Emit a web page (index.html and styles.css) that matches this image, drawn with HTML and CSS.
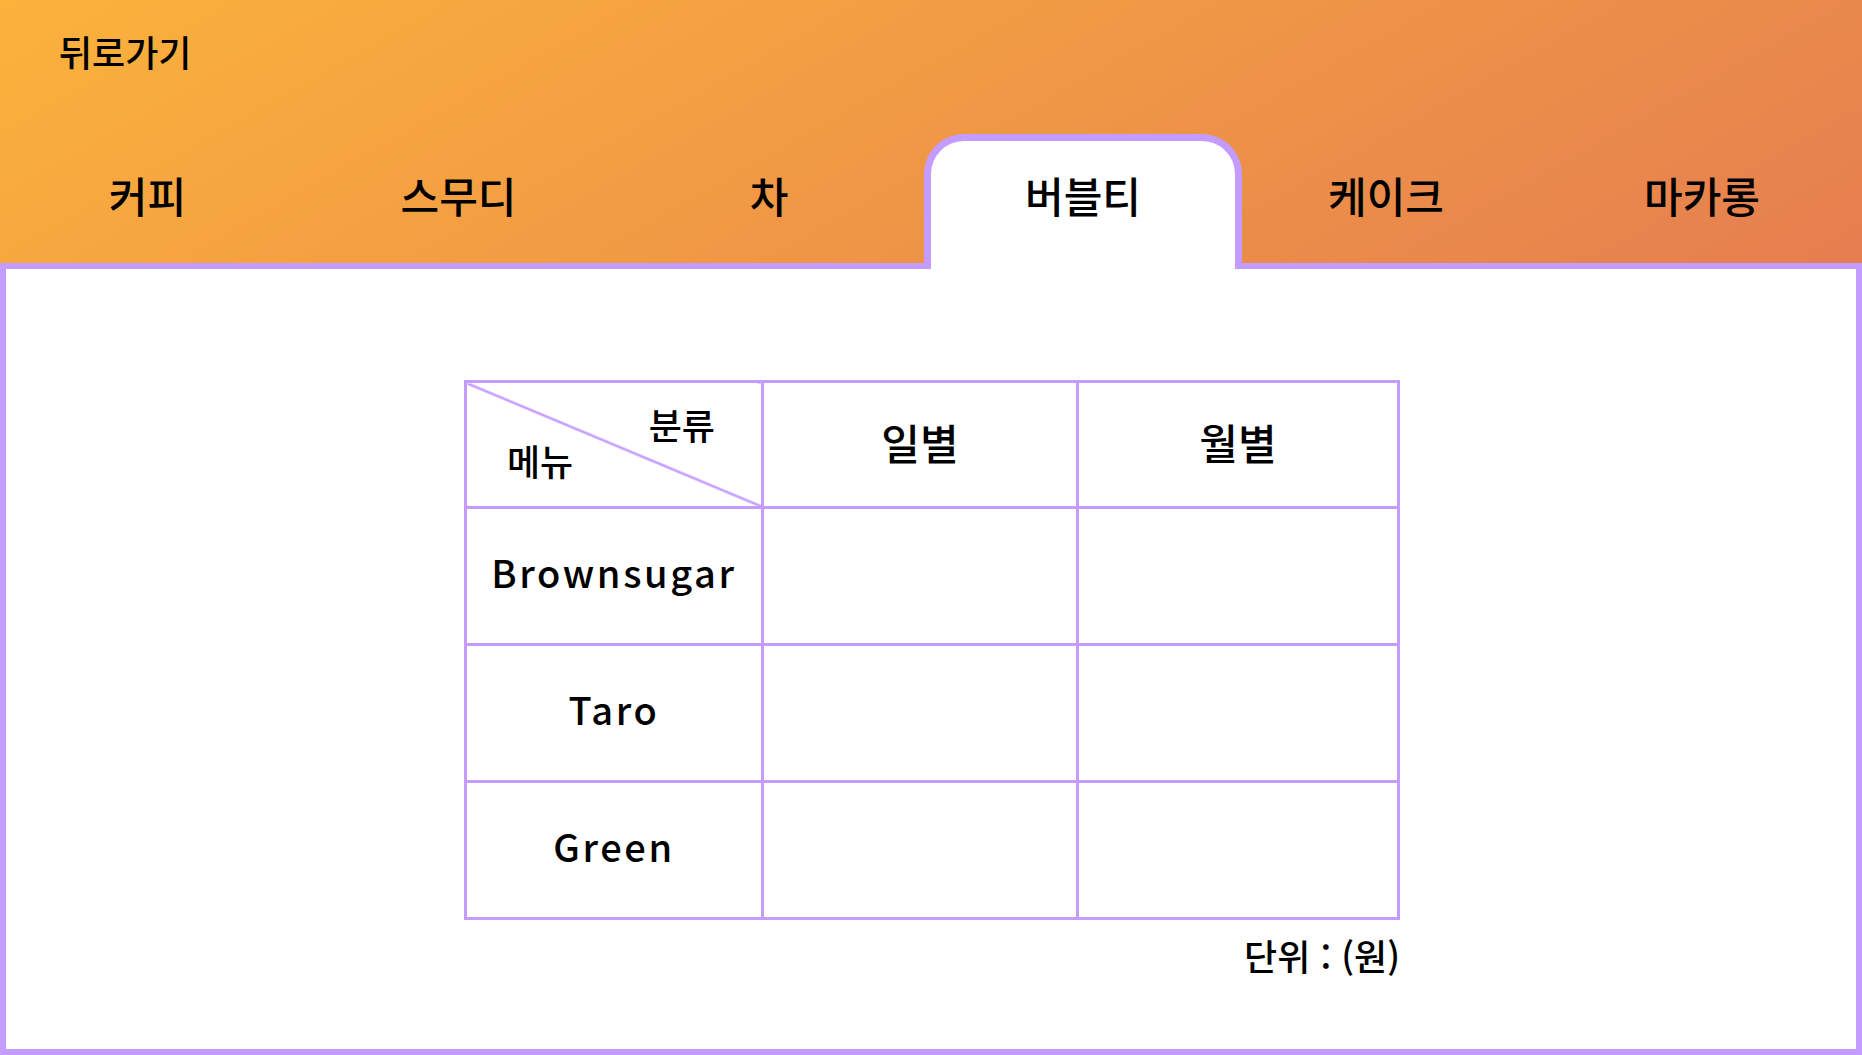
FILE: index.html
```html
<!DOCTYPE html>
<html lang="ko">
<head>
  <meta charset="UTF-8" />
  <meta name="viewport" content="width=device-width, initial-scale=1" />
  <title>매출 - 버블티</title>
  <link rel="stylesheet" href="styles.css">
</head>
<body>

  <header class="top">
    <a class="back" href="#">뒤로가기</a>
    <nav class="tabs">
      <a class="tab" href="#">커피</a>
      <a class="tab" href="#">스무디</a>
      <a class="tab" href="#">차</a>
      <a class="tab active" href="#">버블티</a>
      <a class="tab" href="#">케이크</a>
      <a class="tab" href="#">마카롱</a>
    </nav>
  </header>

  <main class="panel">
    <div class="sales">
      <table class="sales-table">
        <tr class="head-row">
          <th class="corner">
            <div class="corner-box">
              <span class="corner-top">분류</span>
              <span class="corner-bottom">메뉴</span>
            </div>
          </th>
          <th>일별</th>
          <th>월별</th>
        </tr>
        <tr>
          <td class="menu">Brownsugar</td>
          <td></td>
          <td></td>
        </tr>
        <tr>
          <td class="menu">Taro</td>
          <td></td>
          <td></td>
        </tr>
        <tr>
          <td class="menu">Green</td>
          <td></td>
          <td></td>
        </tr>
      </table>
      <p class="unit">단위 : (원)</p>
    </div>
  </main>

</body>
</html>
```

FILE: styles.css
```css
html, body {
  margin: 0;
  height: 100%;
}
body {
  font-family: "Noto Sans CJK KR", "Noto Sans", sans-serif;
  font-weight: 500;
  background: linear-gradient(to bottom right, #fbb23b, #d85f5c);
  color: #000;
  overflow: hidden;
}
a {
  color: inherit;
  text-decoration: none;
}

.top {
  height: 263px;
  display: flex;
  flex-direction: column;
}
.back {
  align-self: flex-start;
  margin: 30px 0 0 59px;
  font-size: 36px;
  line-height: 42px;
}
.tabs {
  margin: auto -12px -6px -8px;
  display: grid;
  grid-template-columns: 311px 311px 310px 318px 288px 344px;
  height: 135px;
  position: relative;
  z-index: 1;
}
.tab {
  display: flex;
  align-items: center;
  justify-content: center;
  border: 7px solid transparent;
  border-bottom: 0;
  padding-bottom: 22px;
  font-size: 42px;
}
.tab.active {
  background: #fff;
  border-color: #c49cff;
  border-radius: 40px 40px 0 0;
}

.panel {
  height: 792px;
  box-sizing: border-box;
  background: #fff;
  border: 6px solid #c49cff;
}
.sales {
  width: 936px;
  margin: 111px auto 0;
  padding-left: 2px;
}
.sales-table {
  width: 936px;
  border-collapse: collapse;
  table-layout: fixed;
}
.sales-table th,
.sales-table td {
  border: 3px solid #c49cff;
  text-align: center;
  font-weight: 500;
  padding: 0;
}
.sales-table th {
  font-size: 42px;
  padding-bottom: 6px;
}
.sales-table th:nth-child(1) { width: 294px; }
.sales-table th:nth-child(2) { width: 312px; }
.sales-table tr {
  height: 137px;
}
.sales-table .head-row {
  height: 126px;
}
.sales-table th.corner {
  padding: 0;
  background: linear-gradient(to top right, transparent calc(50% - 1.5px), #c49cff calc(50% - 1px), #c49cff calc(50% + 1px), transparent calc(50% + 1.5px));
}
.corner-box {
  display: flex;
  flex-direction: column;
  font-size: 36px;
  line-height: 40px;
}
.corner-top {
  align-self: flex-end;
  margin: -6px 46px 0 0;
}
.corner-bottom {
  align-self: flex-start;
  margin: -4px 0 0 40px;
}
.sales-table td.menu {
  font-size: 38px;
  letter-spacing: 2.6px;
  padding-bottom: 10px;
}
.unit {
  margin: 14px 0 0;
  text-align: right;
  font-size: 36px;
  line-height: 42px;
}
```
